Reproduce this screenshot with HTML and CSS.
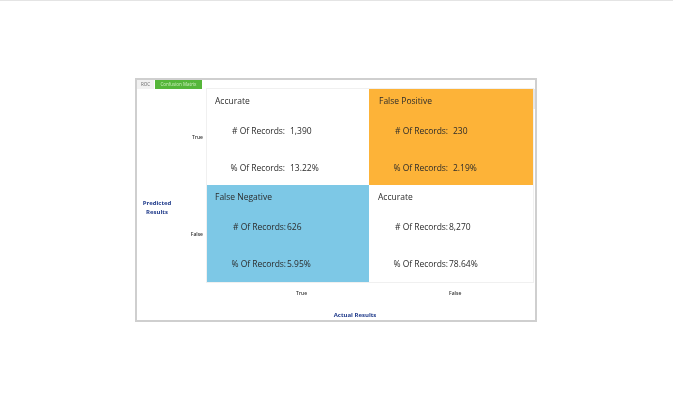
FILE: index.html
```html
<!DOCTYPE html>
<html lang="en">
<head>
<meta charset="utf-8">
<title>Confusion Matrix</title>
<link rel="stylesheet" href="styles.css">
</head>
<body>
<main class="page">
  <section class="panel">
    <nav class="tabs">
      <span class="tab">ROC</span>
      <span class="tab tab-active">Confusion Matrix</span>
    </nav>
    <div class="chart">
      <div class="y-title">Predicted<br>Results</div>
      <div class="y-ticks">
        <span class="tick">True</span>
        <span class="tick">False</span>
      </div>
      <div class="matrix">
        <div class="cell cell-white">
          <h3 class="cell-title">Accurate</h3>
          <dl class="stat"><dt># Of Records:</dt><dd>1,390</dd></dl>
          <dl class="stat"><dt>% Of Records:</dt><dd>13.22%</dd></dl>
        </div>
        <div class="cell cell-orange">
          <h3 class="cell-title">False Positive</h3>
          <dl class="stat"><dt># Of Records:</dt><dd>230</dd></dl>
          <dl class="stat"><dt>% Of Records:</dt><dd>2.19%</dd></dl>
        </div>
        <div class="cell cell-blue tight">
          <h3 class="cell-title">False Negative</h3>
          <dl class="stat"><dt># Of Records:</dt><dd>626</dd></dl>
          <dl class="stat"><dt>% Of Records:</dt><dd>5.95%</dd></dl>
        </div>
        <div class="cell cell-white tight">
          <h3 class="cell-title">Accurate</h3>
          <dl class="stat"><dt># Of Records:</dt><dd>8,270</dd></dl>
          <dl class="stat"><dt>% Of Records:</dt><dd>78.64%</dd></dl>
        </div>
      </div>
      <div class="scroll"><div class="scroll-thumb"></div></div>
      <div class="x-ticks">
        <span class="tick tick-true">True</span>
        <span class="tick tick-false">False</span>
      </div>
      <div class="x-title">Actual Results</div>
    </div>
  </section>
</main>
</body>
</html>
```

FILE: styles.css
```css
* { box-sizing: border-box; }
html, body { margin: 0; background: #fff; }
body { font-family: "Open Sans", "Noto Sans", sans-serif; color: #2b2b2b; }
.page {
  height: 400px;
  border-top: 1px solid #e4e4e4;
  padding: 77px 0 0 135px;
}
.panel {
  width: 402px;
  height: 244px;
  border: 2px solid #cfcfcf;
  background: #fff;
  filter: blur(0.45px);
}
.tabs { display: flex; height: 9px; gap: 1px; }
.tab {
  width: 17px;
  font-size: 4.5px;
  line-height: 9px;
  text-align: center;
  background: #f1f1f1;
  color: #666;
  white-space: nowrap;
}
.tab-active { width: 47px; background: #55b63a; color: #cfeec0; }
.chart {
  display: grid;
  grid-template-columns: 42px 28px 326px 2px;
  grid-template-rows: 193px 22px 18px;
}
.y-title {
  grid-column: 1; grid-row: 1;
  align-self: center;
  margin-top: 45px;
  padding-right: 2px;
  text-align: center;
  font-size: 6px;
  line-height: 9px;
  font-weight: 700;
  color: #1f3a8a;
}
.y-ticks {
  grid-column: 2; grid-row: 1;
  display: grid;
  grid-template-rows: 96px 97px;
  justify-items: end;
  align-items: center;
  padding-right: 4px;
}
.tick { font-size: 5px; font-weight: 600; color: #333; }
.matrix {
  grid-column: 3; grid-row: 1;
  display: grid;
  grid-template-columns: 162px 164px;
  grid-template-rows: 96px 97px;
  box-shadow: 0 0 0 1px #f0f0f0;
}
.scroll { grid-column: 4; grid-row: 1; }
.scroll-thumb { width: 2px; height: 20px; background: #e6e6e6; }
.cell { padding-top: 5px; font-size: 8.5px; }
.cell-white { background: #fff; }
.cell-orange { background: #fdb338; }
.cell-blue { background: #7dc8e6; }
.cell-title {
  margin: 0 0 0 8px;
  font-size: 8.5px;
  line-height: 13px;
  font-weight: 400;
  height: 24px;
}
.cell-orange .cell-title { margin-left: 10px; }
.cell-white.tight .cell-title { margin-left: 9px; }
.stat {
  display: grid;
  grid-template-columns: 78px auto;
  column-gap: 5px;
  justify-content: start;
  margin: 0;
  height: 37px;
  padding-top: 6px;
  line-height: 13px;
}
.cell-orange .stat { grid-template-columns: 79px auto; }
.tight .stat { grid-template-columns: 79px auto; column-gap: 1px; }
.stat dt { text-align: right; letter-spacing: -0.05px; }
.stat dd { margin: 0; }
.x-ticks {
  grid-column: 3; grid-row: 2;
  display: flex;
  padding-top: 7px;
  line-height: 9px;
}
.tick-true { margin-left: 89px; }
.tick-false { margin-left: 142px; }
.x-title {
  grid-column: 1 / 5; grid-row: 3;
  text-align: center;
  font-size: 6px;
  font-weight: 700;
  color: #1f3a8a;
  line-height: 9px;
  padding-top: 7px;
  padding-left: 38px;
}
```
